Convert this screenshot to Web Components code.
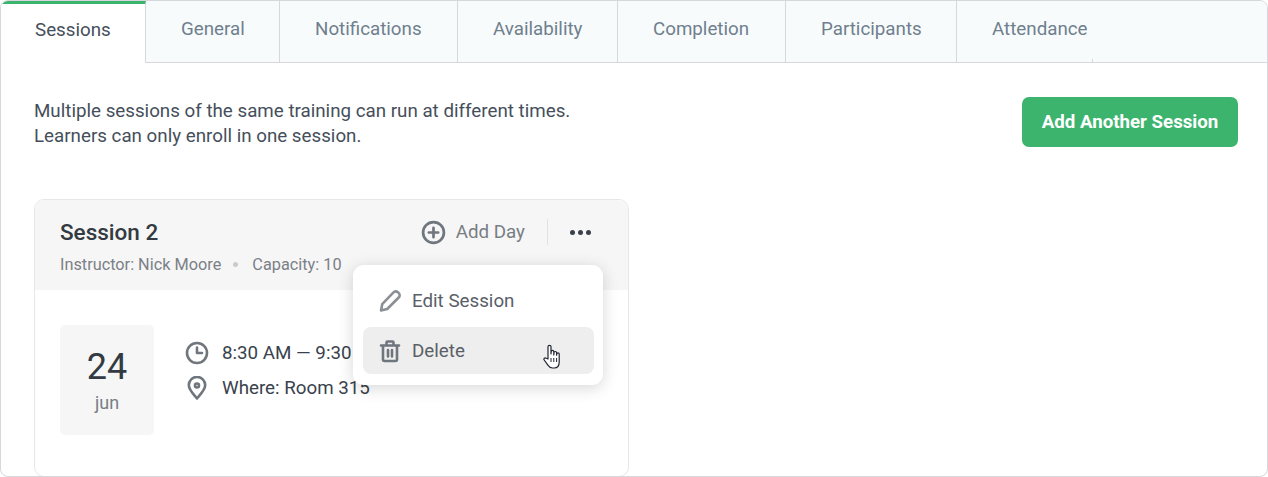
<!DOCTYPE html>
<html lang="en">
<head>
<meta charset="utf-8">
<title>Sessions</title>
<style>
    html, body { margin: 0; padding: 0; background: #fff; }
    body { font-family: Roboto, "Liberation Sans", sans-serif; }
</style>
</head>
<body>
<training-panel>
    <tab-bar slot="tabs"></tab-bar>
    <session-intro></session-intro>
    <session-card></session-card>
</training-panel>

<script>
class TrainingPanel extends HTMLElement {
    constructor() {
        super();
        this.attachShadow({ mode: 'open' });
        this.shadowRoot.innerHTML = `
            <style>
                :host {
                    display: block;
                    box-sizing: border-box;
                    width: 1268px;
                    height: 477px;
                    border: 1px solid #d6d8db;
                    border-radius: 8px;
                    overflow: hidden;
                    background: #fff;
                }
                .body { padding: 34px 29px 0 33px; }
            </style>
            <slot name="tabs"></slot>
            <div class="body"><slot></slot></div>
        `;
    }
}

class TabBar extends HTMLElement {
    constructor() {
        super();
        this.attachShadow({ mode: 'open' });
        const tabs = ['Sessions', 'General', 'Notifications', 'Availability', 'Completion', 'Participants', 'Attendance'];
        const widths = [145, 134, 178, 160, 168, 171, 133];
        this.shadowRoot.innerHTML = `
            <style>
                :host {
                    display: flex;
                    height: 62px;
                    box-sizing: border-box;
                    background: #f8fbfc;
                    border-bottom: 1px solid #d6d8db;
                    position: relative;
                }
                .tab {
                    box-sizing: border-box;
                    height: 61px;
                    padding: 0 0 5px 35px;
                    display: flex;
                    align-items: center;
                    font-size: 18.750px;
                    color: #6f7f8e;
                    border-right: 1px solid #d6d8db;
                    white-space: nowrap;
                }
                .tab.last { border-right: 0; }
                .tab.active {
                    height: 62px;
                    padding: 0 0 7px 34px;
                    margin-bottom: -1px;
                    background: #fff;
                    color: #454f5b;
                    border-top: 3px solid #3cb46e;
                }
                .tick {
                    position: absolute;
                    left: 1091px;
                    bottom: 0;
                    width: 1px;
                    height: 3px;
                    background: #d6d8db;
                }
            </style>
            ${tabs.map((t, i) => `<div class="tab${i === 0 ? ' active' : ''}${i === 6 ? ' last' : ''}" style="width:${widths[i]}px">${t}</div>`).join('')}
            <div class="tick"></div>
        `;
    }
}

class SessionIntro extends HTMLElement {
    constructor() {
        super();
        this.attachShadow({ mode: 'open' });
        this.shadowRoot.innerHTML = `
            <style>
                :host {
                    display: flex;
                    justify-content: space-between;
                    align-items: flex-start;
                    height: 102px;
                }
                p {
                    margin: 2px 0 0 0;
                    font-size: 18.750px;
                    line-height: 25px;
                    color: #454f5b;
                }
                button {
                    width: 216px;
                    height: 50px;
                    padding: 0;
                    border: 0;
                    border-radius: 7px;
                    background: #3cb46e;
                    color: #fff;
                    font: 700 18.700px Roboto, "Liberation Sans", sans-serif;
                }
            </style>
            <p>Multiple sessions of the same training can run at different times.<br>Learners can only enroll in one session.</p>
            <button>Add Another Session</button>
        `;
    }
}

class IconGlyph extends HTMLElement {
    static paths = {
        plus: '<circle cx="12" cy="12" r="10"/><path d="M12 7.500v9M7.500 12h9"/>',
        clock: '<circle cx="12" cy="12" r="10"/><path d="M12 6.500V12h5"/>',
        pin: '<path d="M12 22.500c-1.200-1.800-8.200-8-8.200-13.400a8.200 8.200 0 0 1 16.400 0c0 5.400-7 11.600-8.200 13.400z"/><circle cx="12" cy="9.500" r="2"/>',
        pencil: '<path d="M3 21.500l1.200-6.300L15.500 3.400a3 3 0 0 1 4.300-.2l1 1a3 3 0 0 1-.1 4.300L9.200 20z"/>',
        trash: '<path d="M3 6.500h18M8.500 6V3.500a1 1 0 0 1 1-1h5a1 1 0 0 1 1 1V6M5 6.500v14a1.500 1.500 0 0 0 1.500 1.500h11a1.500 1.500 0 0 0 1.500-1.500v-14M10 11v6.500M14 11v6.500"/>'
    };

    constructor() {
        super();
        this.attachShadow({ mode: 'open' });
    }

    connectedCallback() {
        const name = this.getAttribute('name');
        const size = this.getAttribute('size') || 24;
        const stroke = this.getAttribute('stroke') || '2.600';
        this.shadowRoot.innerHTML = `
            <style>
                :host { display: inline-flex; flex: none; color: #70767d; }
                svg { display: block; fill: none; stroke: currentColor; stroke-width: ${stroke}; stroke-linecap: round; stroke-linejoin: round; }
            </style>
            <svg width="${size}" height="${size}" viewBox="0 0 24 24">${IconGlyph.paths[name]}</svg>
        `;
    }
}

class SessionCard extends HTMLElement {
    constructor() {
        super();
        this.attachShadow({ mode: 'open' });
        this.shadowRoot.innerHTML = `
            <style>
                :host {
                    display: block;
                    box-sizing: border-box;
                    width: 595px;
                    height: 278px;
                    border: 1px solid #e6e7e9;
                    border-radius: 10px;
                    position: relative;
                    background: #fff;
                }
                header {
                    box-sizing: border-box;
                    height: 90px;
                    padding: 17px 25px 0 25px;
                    background: #f6f6f6;
                    border-radius: 9px 9px 0 0;
                }
                .top { display: flex; align-items: center; height: 30px; }
                h3 { margin: 0; font-size: 22.500px; font-weight: 500; color: #333a42; flex: 1; }
                .add { display: flex; align-items: center; gap: 10px; font-size: 18.750px; color: #787e85; }
                .divider { width: 1px; height: 26px; background: #e1e2e4; margin: 0 22px; }
                .dots { display: flex; gap: 3px; margin-right: 12px; }
                .dots i { width: 5px; height: 5px; border-radius: 50%; background: #3a4149; }
                .meta { display: flex; align-items: center; margin-top: 8px; font-size: 16.300px; color: #7b8087; }
                .sep { width: 5px; height: 5px; border-radius: 50%; background: #c9cbce; margin: 0 14px 0 12px; }
                .content { display: flex; padding: 35px 0 0 25px; }
                .date {
                    box-sizing: border-box;
                    width: 94px;
                    height: 110px;
                    background: #f6f6f6;
                    border-radius: 5px;
                    display: flex;
                    flex-direction: column;
                    align-items: center;
                    padding-top: 21px;
                }
                .day { font-size: 36px; line-height: 42px; color: #333a42; }
                .month { font-size: 18px; line-height: 24px; color: #787e85; margin-top: 3px; }
                .details { margin: 10px 0 0 31px; font-size: 18.750px; color: #39424c; }
                .row { display: flex; align-items: center; gap: 13px; height: 35px; white-space: nowrap; }
                .menu {
                    position: absolute;
                    left: 318px;
                    top: 65px;
                    box-sizing: border-box;
                    width: 250px;
                    height: 120px;
                    padding: 12px 9px 0 10px;
                    background: #fff;
                    border-radius: 11px;
                    box-shadow: 0 3px 16px rgba(0, 0, 0, 0.16);
                }
                .item {
                    display: flex;
                    align-items: center;
                    gap: 10px;
                    height: 47px;
                    padding-left: 15px;
                    border-radius: 8px;
                    font-size: 18.750px;
                    color: #5a6068;
                    position: relative;
                }
                .item + .item { margin-top: 3px; background: #eeeeee; }
                .edit-icon { color: #8c9096; }
                .hand { position: absolute; left: 180px; top: 17px; }
            </style>
            <header>
                <div class="top">
                    <h3>Session 2</h3>
                    <div class="add"><icon-glyph name="plus" size="25"></icon-glyph>Add Day</div>
                    <div class="divider"></div>
                    <div class="dots"><i></i><i></i><i></i></div>
                </div>
                <div class="meta">Instructor: Nick Moore<span class="sep"></span>Capacity: 10</div>
            </header>
            <div class="content">
                <div class="date">
                    <div class="day">24</div>
                    <div class="month">jun</div>
                </div>
                <div class="details">
                    <div class="row"><icon-glyph name="clock" size="24"></icon-glyph>8:30 AM — 9:30 AM</div>
                    <div class="row"><icon-glyph name="pin" size="24"></icon-glyph>Where: Room 315</div>
                </div>
            </div>
            <div class="menu">
                <div class="item"><icon-glyph class="edit-icon" name="pencil" size="24"></icon-glyph>Edit Session</div>
                <div class="item"><icon-glyph name="trash" size="24"></icon-glyph>Delete
                    <svg class="hand" width="19" height="25" viewBox="0 0 19 25"><path d="M5 15V2.800a1.500 1.500 0 0 1 3 0V10l.2-2.300a1.300 1.300 0 0 1 2.600 0V11l.2-2.200a1.300 1.300 0 0 1 2.600 0v2.400l.2-1.200a1.200 1.200 0 0 1 2.400 0V18c0 3.500-1.700 6-5 6H9.500c-2.300 0-3.500-1.100-4.600-2.800L1.200 16c-.9-1.300.7-2.900 2-1.700z" fill="#fff" stroke="#1f2530" stroke-width="1.200" stroke-linejoin="round"/><path d="M8 14v4M10.800 14v4M13.600 14v4" stroke="#1f2530" stroke-width="1"/></svg>
                </div>
            </div>
        `;
    }
}

customElements.define('icon-glyph', IconGlyph);
customElements.define('training-panel', TrainingPanel);
customElements.define('tab-bar', TabBar);
customElements.define('session-intro', SessionIntro);
customElements.define('session-card', SessionCard);
</script>
</body>
</html>
